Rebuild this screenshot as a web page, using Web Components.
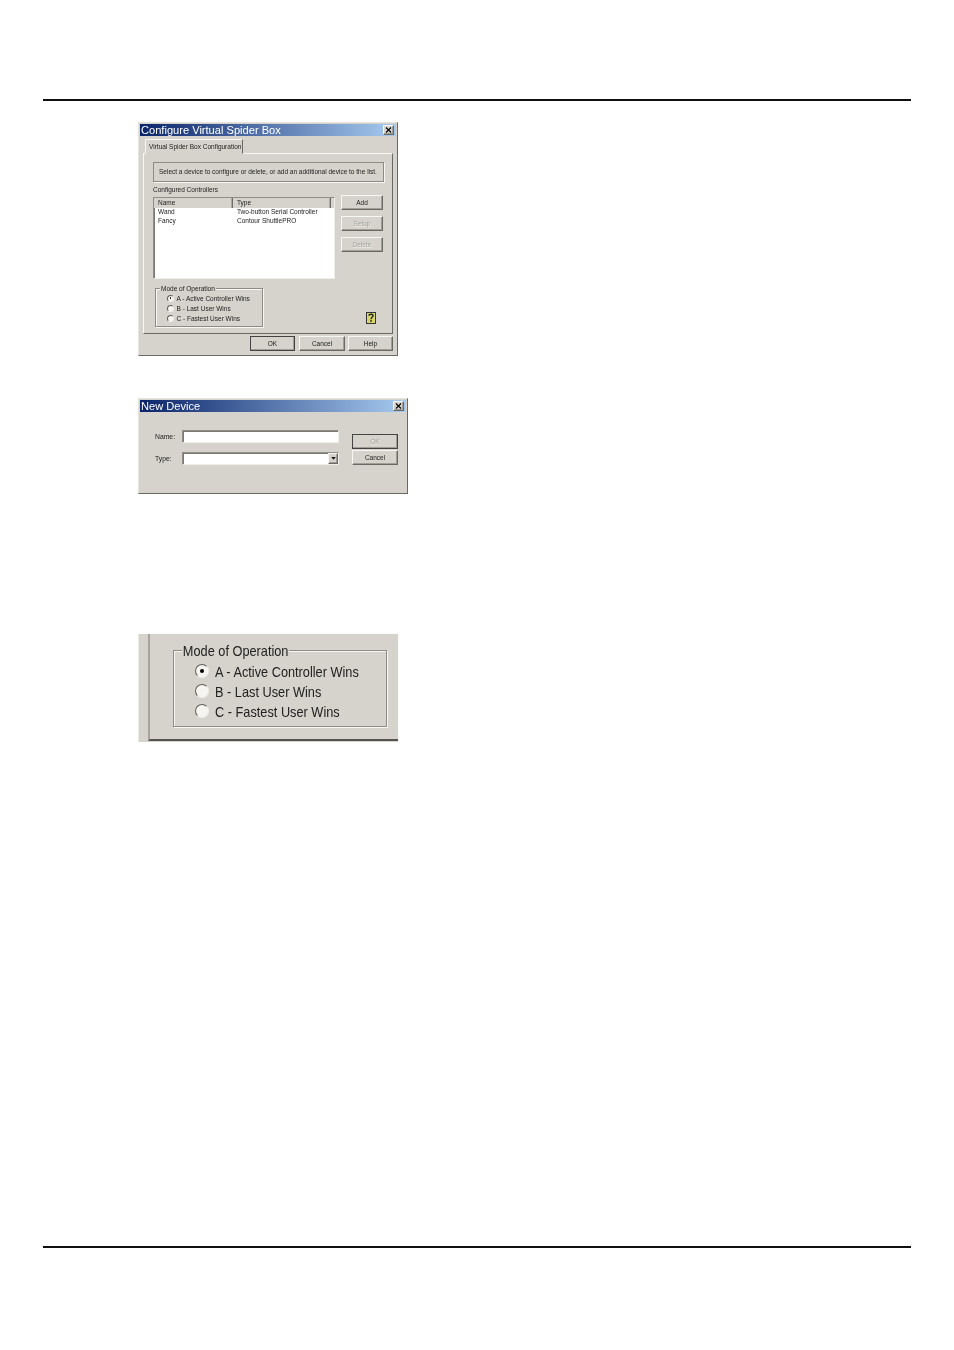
<!DOCTYPE html>
<html>
<head>
<meta charset="utf-8">
<style>
  html, body { margin: 0; background: #fff; }
  body { font-family: "Liberation Sans", Arial, sans-serif; color: #000; }
</style>
</head>
<body>
<doc-page>
  <win-dialog title="Configure Virtual Spider Box" style="--w:260px;--h:234px">
    <spider-config></spider-config>
  </win-dialog>
  <win-dialog title="New Device" style="--w:270px;--h:96px;margin-top:42px">
    <new-device></new-device>
  </win-dialog>
  <mode-crop style="margin-top:140px"></mode-crop>
</doc-page>

<script>
const RAISED = `
  border: 1px solid; border-color: #f7f6f2 #6a6964 #6a6964 #f7f6f2;
  box-shadow: inset -1px -1px 0 #a09e97;
`;
const SUNKEN = `
  border: 1px solid; border-color: #8f8d86 #f0efea #f0efea #8f8d86;
  box-shadow: inset 1px 1px 0 #7b7973;
`;

class DocPage extends HTMLElement {
    constructor() {
        super();
        this.attachShadow({ mode: 'open' });
        this.shadowRoot.innerHTML = `
            <style>
                :host { display: block; width: 954px; height: 1350px; box-sizing: border-box; padding: 99px 43px 0; }
                .rule { height: 2px; background: #111; }
                .content { height: 1145px; padding: 21px 0 0 95px; box-sizing: border-box; }
            </style>
            <div class="rule"></div>
            <div class="content"><slot></slot></div>
            <div class="rule"></div>
        `;
    }
}

class WinDialog extends HTMLElement {
    constructor() {
        super();
        this.attachShadow({ mode: 'open' });
        this.shadowRoot.innerHTML = `
            <style>
                :host { display: block; width: var(--w); height: var(--h); box-sizing: border-box; background: #d5d3cc;
                    border: 1px solid; border-color: #e4e3de #6a6964 #6a6964 #e4e3de; padding: 1px; filter: blur(.35px); }
                .bar { height: 12px; display: flex; align-items: center; justify-content: space-between; padding: 0 2px 0 1px;
                    background: linear-gradient(90deg, #0a246a, #a6caf0); }
                .title { color: #fff; font-size: 11.1px; line-height: 12px; white-space: nowrap; }
                .x { width: 11px; height: 10px; box-sizing: border-box; background: #d5d3cc; ${RAISED} }
                svg { display: block; width: 9px; height: 8px; }
            </style>
            <div class="bar">
                <span class="title"></span>
                <span class="x"><svg viewBox="0 0 9 8"><path d="M2 1.5l5 5M7 1.5l-5 5" stroke="#000" stroke-width="1.1"/></svg></span>
            </div>
            <slot></slot>
        `;
        this.shadowRoot.querySelector('.title').textContent = this.getAttribute('title');
        this.removeAttribute('title');
    }
}

class WinButton extends HTMLElement {
    constructor() {
        super();
        this.attachShadow({ mode: 'open' });
        this.shadowRoot.innerHTML = `
            <style>
                :host { display: flex; align-items: center; justify-content: center; box-sizing: border-box;
                    height: var(--bh, 15px); background: #d5d3cc; font-size: 6.5px; color: #222; ${RAISED} }
                :host([disabled]) { color: #a3a19a; text-shadow: .5px .5px 0 #f4f3ef; }
                :host([default]) { border-color: #444; }
            </style>
            <slot></slot>
        `;
    }
}

class WinRadio extends HTMLElement {
    constructor() {
        super();
        this.attachShadow({ mode: 'open' });
        this.shadowRoot.innerHTML = `
            <style>
                :host { display: flex; align-items: center; gap: var(--rgap, 3px); height: var(--rh, 10px);
                    white-space: nowrap; font-size: var(--rf, 6.5px); color: #222; }
                .dot { flex: none; width: var(--rs, 7px); height: var(--rs, 7px); box-sizing: border-box; border-radius: 50%;
                    background: #f6f5f1; border: 1px solid; border-color: #5f5d58 #eeede8 #eeede8 #5f5d58;
                    display: flex; align-items: center; justify-content: center; }
                i { display: none; width: 38%; height: 38%; border-radius: 50%; background: #000; }
                :host([checked]) i { display: block; }
                .label { display: inline-block; transform: scaleX(var(--sx, 1)); transform-origin: left center; }
            </style>
            <span class="dot"><i></i></span>
            <span class="label"><slot></slot></span>
        `;
    }
}

class WinGroup extends HTMLElement {
    constructor() {
        super();
        this.attachShadow({ mode: 'open' });
        this.shadowRoot.innerHTML = `
            <style>
                :host { display: block; box-sizing: border-box; position: relative; border: 1px solid #8d8b85;
                    box-shadow: 1px 1px 0 #f7f6f2, inset 1px 1px 0 #f7f6f2; }
                .legend { position: absolute; left: var(--lx, 4px); top: var(--ly, -4px); padding: 0 1px; background: #d5d3cc;
                    font-size: var(--lf, 6.5px); line-height: 1.3; color: #222; white-space: nowrap;
                    transform: scaleX(var(--sx, 1)); transform-origin: left center; }
            </style>
            <span class="legend"></span>
            <slot></slot>
        `;
        this.shadowRoot.querySelector('.legend').textContent = this.getAttribute('label');
    }
}

class DeviceList extends HTMLElement {
    constructor() {
        super();
        this.attachShadow({ mode: 'open' });
        this.shadowRoot.innerHTML = `
            <style>
                :host { display: block; box-sizing: border-box; width: 182px; height: 82px; background: #fff; font-size: 6.5px; color: #222; ${SUNKEN} }
                .row { display: grid; grid-template-columns: 79px 1fr; height: 8.5px; line-height: 8.5px; padding-left: 4px; }
                .head { display: grid; grid-template-columns: 79px 98px 1fr; height: 10px; line-height: 10px; background: #d5d3cc; margin-bottom: 0; }
                .head span { padding-left: 4px; border-right: 1px solid #6d6b66; box-shadow: inset -1px 0 0 #aaa; }
                .head span:last-child { border: 0; box-shadow: none; }
            </style>
            <div class="head"><span>Name</span><span>Type</span><span></span></div>
            <div class="row"><span>Wand</span><span>Two-button Serial Controller</span></div>
            <div class="row"><span>Fancy</span><span>Contour ShuttlePRO</span></div>
        `;
    }
}

class HelpIcon extends HTMLElement {
    constructor() {
        super();
        this.attachShadow({ mode: 'open' });
        this.shadowRoot.innerHTML = `
            <style>
                :host { display: block; width: 10px; height: 12px; }
                svg { display: block; }
            </style>
            <svg width="10" height="12" viewBox="0 0 10 12">
                <rect x=".5" y=".5" width="9" height="11" fill="#d8d66a" stroke="#333"/>
                <path d="M3 3.8C3 1.8 7 1.8 7 3.8 7 5.4 5 5.2 5 7.2" fill="none" stroke="#222" stroke-width="1.4"/>
                <rect x="4.2" y="8.2" width="1.6" height="1.6" fill="#222"/>
            </svg>
        `;
    }
}

class SpiderConfig extends HTMLElement {
    constructor() {
        super();
        this.attachShadow({ mode: 'open' });
        this.shadowRoot.innerHTML = `
            <style>
                :host { display: block; padding: 3px 3px 0 3px; font-size: 6.5px; color: #222; }
                .tab { display: block; width: 98px; height: 15px; margin-left: 2px; box-sizing: border-box; line-height: 13px; padding-left: 3px;
                    white-space: nowrap; border: 1px solid; border-color: #f7f6f2 #6a6964 #d5d3cc #f7f6f2; background: #d5d3cc; position: relative; z-index: 1; margin-bottom: -1px; }
                .panel { height: 181px; box-sizing: border-box; padding: 8px 9px 0 9px; border: 1px solid; border-color: #f7f6f2 #6a6964 #6a6964 #f7f6f2; }
                .intro { height: 20px; width: 231px; box-sizing: border-box; line-height: 17px; padding-left: 5px; white-space: nowrap; border: 1px solid #8d8b85; box-shadow: 1px 1px 0 #f7f6f2; }
                .cap { line-height: 8px; margin: 4px 0 3px; }
                .middle { display: flex; gap: 6px; }
                .side { width: 42px; display: flex; flex-direction: column; gap: 6px; margin-top: -2px; }
                .lower { display: flex; align-items: flex-end; justify-content: space-between; margin-top: 9px; padding: 0 7px 0 2px; }
                .modes { width: 108px; height: 39px; box-sizing: border-box; padding: 4px 0 0 11px; --rh: 10px; --rgap: 2.5px; }
                .lower help-icon { margin-bottom: 3px; }
                .foot { display: flex; justify-content: flex-end; gap: 3px; margin-top: 2px; }
                .foot win-button { width: 45px; }
                .foot win-button:first-child { margin-right: 1px; }
                .foot win-button:nth-child(2) { width: 46px; }
            </style>
            <span class="tab">Virtual Spider Box Configuration</span>
            <div class="panel">
                <div class="intro">Select a device to configure or delete, or add an additional device to the list.</div>
                <div class="cap">Configured Controllers</div>
                <div class="middle">
                    <device-list></device-list>
                    <div class="side">
                        <win-button>Add</win-button>
                        <win-button disabled>Setup</win-button>
                        <win-button disabled>Delete</win-button>
                    </div>
                </div>
                <div class="lower">
                    <win-group class="modes" label="Mode of Operation">
                        <win-radio checked>A - Active Controller Wins</win-radio>
                        <win-radio>B - Last User Wins</win-radio>
                        <win-radio>C - Fastest User Wins</win-radio>
                    </win-group>
                    <help-icon></help-icon>
                </div>
            </div>
            <div class="foot">
                <win-button default>OK</win-button>
                <win-button>Cancel</win-button>
                <win-button>Help</win-button>
            </div>
        `;
    }
}

class NewDevice extends HTMLElement {
    constructor() {
        super();
        this.attachShadow({ mode: 'open' });
        this.shadowRoot.innerHTML = `
            <style>
                :host { display: grid; grid-template-columns: 184px 46px; column-gap: 13px; padding: 18px 0 0 15px; font-size: 6.8px; color: #222; }
                .fields { display: grid; grid-template-columns: 27px 157px; grid-auto-rows: 13px; row-gap: 9px; align-items: center; }
                .input { height: 13px; box-sizing: border-box; background: #fff; position: relative; ${SUNKEN} }
                .arrow { position: absolute; right: 0; top: 0; width: 10px; height: 11px; box-sizing: border-box; background: #d5d3cc; ${RAISED}
                    display: flex; align-items: center; justify-content: center; }
                .arrow svg { display: block; }
                .btns { display: flex; flex-direction: column; gap: 1px; margin-top: 4px; }
            </style>
            <div class="fields">
                <span>Name:</span><span class="input"></span>
                <span>Type:</span><span class="input"><span class="arrow"><svg width="5" height="3" viewBox="0 0 6 4"><path d="M0 0h6L3 3.5z" fill="#111"/></svg></span></span>
            </div>
            <div class="btns">
                <win-button default disabled>OK</win-button>
                <win-button>Cancel</win-button>
            </div>
        `;
    }
}

class ModeCrop extends HTMLElement {
    constructor() {
        super();
        this.attachShadow({ mode: 'open' });
        this.shadowRoot.innerHTML = `
            <style>
                :host { display: block; width: 260px; height: 108px; box-sizing: border-box; background: #d5d3cc; filter: blur(.35px);
                    border-left: 1px solid #eceae5; }
                .inner { height: 107px; margin-left: 9px; box-sizing: border-box; border-left: 2px solid #a5a39c; border-bottom: 2px solid #55544f; padding: 16px 11px 0 23px; }
                .group { display: block; height: 77px; box-sizing: border-box; padding: 10px 0 0 21px;
                    --lx: 8px; --ly: -10px; --lf: 15px; --rf: 15px; --rs: 14px; --rh: 20px; --rgap: 6px; --sx: .85; }
            </style>
            <div class="inner">
                <win-group class="group" label="Mode of Operation">
                    <win-radio checked>A - Active Controller Wins</win-radio>
                    <win-radio>B - Last User Wins</win-radio>
                    <win-radio>C - Fastest User Wins</win-radio>
                </win-group>
            </div>
        `;
    }
}

customElements.define('doc-page', DocPage);
customElements.define('win-dialog', WinDialog);
customElements.define('win-button', WinButton);
customElements.define('win-radio', WinRadio);
customElements.define('win-group', WinGroup);
customElements.define('device-list', DeviceList);
customElements.define('help-icon', HelpIcon);
customElements.define('spider-config', SpiderConfig);
customElements.define('new-device', NewDevice);
customElements.define('mode-crop', ModeCrop);
</script>
</body>
</html>
